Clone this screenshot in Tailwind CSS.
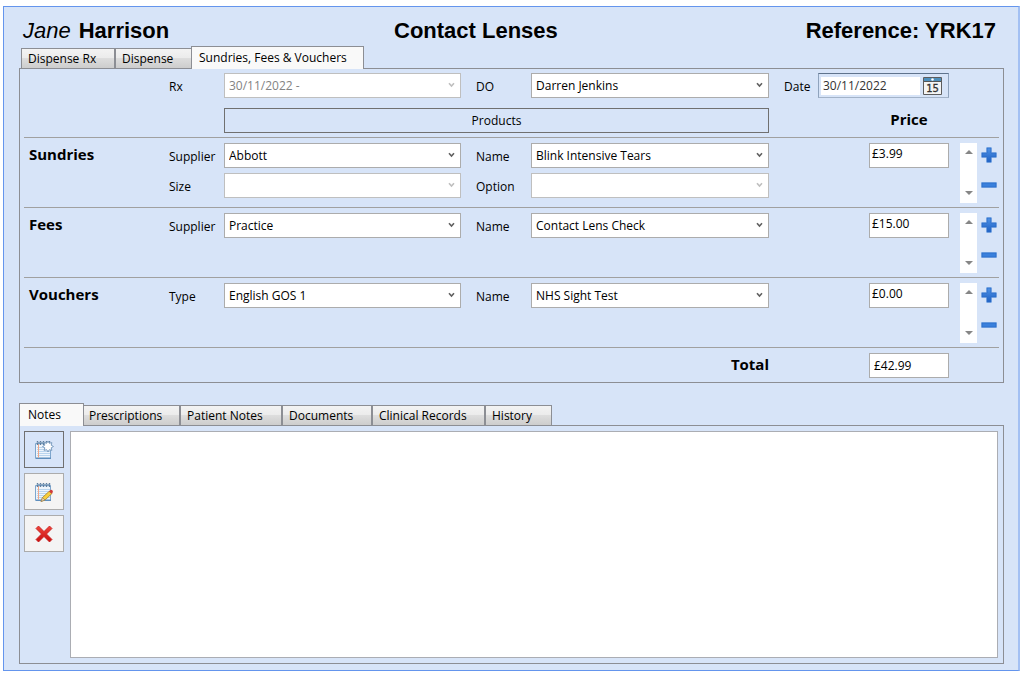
<!DOCTYPE html>
<html lang="en">
<head>
<meta charset="utf-8">
<meta name="viewport" content="width=device-width, initial-scale=1">
<title>Contact Lenses - Sundries, Fees &amp; Vouchers</title>
<script src="https://cdn.jsdelivr.net/npm/@tailwindcss/browser@4"></script>
</head>
<body class="flex min-h-screen flex-col bg-white pt-[6px] pr-[4px] pb-[5px] pl-[3px] font-['Open_Sans','Noto_Sans',sans-serif] text-[12px] leading-4 text-black">

<svg class="absolute h-0 w-0" aria-hidden="true">
  <defs>
    <linearGradient id="blue" x1="0" y1="0" x2="0" y2="1"><stop offset="0" stop-color="#4f92e6"/><stop offset="1" stop-color="#1f62c4"/></linearGradient>
    <linearGradient id="red" x1="0" y1="0" x2="0" y2="1"><stop offset="0" stop-color="#f0463c"/><stop offset="1" stop-color="#c80f0f"/></linearGradient>
    <symbol id="chevron" viewBox="0 0 7 6"><path d="M1 1.2 3.5 4 6 1.2" fill="none" stroke="currentColor" stroke-width="1.6"/></symbol>
    <symbol id="up" viewBox="0 0 8 4"><path d="M0 4 4 0 8 4Z" fill="#868686"/></symbol>
    <symbol id="down" viewBox="0 0 8 4"><path d="M0 0 4 4 8 0Z" fill="#868686"/></symbol>
    <symbol id="plus" viewBox="0 0 16 16"><path d="M5 0h6v5h5v6h-5v5H5v-5H0V5h5Z" fill="#a3c3ee"/><path d="M6 1h4v5h5v4h-5v5H6v-5H1V6h5Z" fill="url(#blue)" stroke="#2c6cc8" stroke-width=".8"/></symbol>
    <symbol id="minus" viewBox="0 0 16 6"><path d="M0 0h16v6H0Z" fill="#8fb6ea"/><path d="M1 1h14v4H1Z" fill="#3a80dc" stroke="#2c6cc8" stroke-width=".8"/></symbol>
    <symbol id="notebook" viewBox="0 0 20 20">
      <path d="M1.500 3.500h15v15h-15Z" fill="#eef5fc" stroke="#7ea6cd"/>
      <path d="M2 17.500h15v1.500H2Z" fill="#5f8fbd"/>
      <path d="M3 7.500h13M3 9.500h13M3 11.500h13M3 13.500h13M3 15.500h13" stroke="#b9d5ee"/>
      <path d="M4.500 4v13.500" stroke="#f2a787"/>
      <path d="M3.500 1v4M6.500 1v4M9.500 1v4M12.500 1v4M15.500 1v4" stroke="#5f7f9f" stroke-width="1.400"/>
      <path d="M3 2.500h12.500" stroke="#8aa6c0"/>
    </symbol>
  </defs>
</svg>

<main class="flex flex-1 flex-col border border-r-2 border-[#6495ed] border-r-[#a3c0f3] bg-[#d7e4f8] pr-[14px] pb-[6px] pl-[15px]">

  <header class="grid h-[39px] grid-cols-[371px_1fr_auto] items-center pt-2 pr-2 pl-1 font-['Liberation_Sans',Arial,sans-serif] text-[22px] leading-7">
    <p class="flex gap-2"><i>Jane</i><b>Harrison</b></p>
    <h1 class="font-bold">Contact Lenses</h1>
    <p class="font-bold">Reference: YRK17</p>
  </header>

  <nav class="flex h-[22px] items-end pl-[2px]" aria-label="Dispensing">
    <button class="h-5 w-[94px] border border-b-0 border-[#8c8e94] bg-[linear-gradient(#f3f3f3,#ebebeb_50%,#dddddd_50%,#cdcdcd)] px-[6px] text-left">Dispense Rx</button>
    <button class="h-5 w-[76px] border border-r-0 border-b-0 border-[#8c8e94] bg-[linear-gradient(#f3f3f3,#ebebeb_50%,#dddddd_50%,#cdcdcd)] px-[6px] text-left">Dispense</button>
    <button class="relative z-10 -mb-px h-[23px] w-[173px] border border-b-0 border-[#8c8e94] bg-[#f9f9f9] px-[7px] text-left whitespace-nowrap" aria-current="page">Sundries, Fees &amp; Vouchers</button>
  </nav>

  <section class="border border-[#8c8e94] px-1 py-1">
    <div class="grid grid-cols-[145px_55px_minmax(0,237fr)_70px_minmax(0,238fr)_100px_80px_50px] gap-y-[10px] pb-1">
      <label for="rx" class="col-start-2 pt-[6px]">Rx</label>
      <div class="relative">
        <select id="rx" disabled class="h-[25px] w-full appearance-none border border-[#bfbfbf] bg-white px-1 text-[#838383] opacity-100"><option>30/11/2022 -</option></select>
        <svg class="pointer-events-none absolute top-[9px] right-[6px] h-[6px] w-[7px] text-[#bfbfbf]"><use href="#chevron"/></svg>
      </div>
      <label for="do" class="pt-[6px] pl-[15px]">DO</label>
      <div class="relative">
        <select id="do" class="h-[25px] w-full appearance-none border border-[#acacac] bg-white px-1"><option>Darren Jenkins</option></select>
        <svg class="pointer-events-none absolute top-[9px] right-[6px] h-[6px] w-[7px] text-[#606060]"><use href="#chevron"/></svg>
      </div>
      <div class="col-span-3 flex pl-[15px]">
        <label for="date" class="w-[34px] pt-[6px]">Date</label>
        <div class="flex h-[25px] w-[131px] items-center border border-t-[#5f738c] border-r-[#8fa3bd] border-b-[#a3b3c8] border-l-[#8fa3bd] p-[2px]">
          <input id="date" value="30/11/2022" class="h-[18px] min-w-0 flex-1 bg-white px-[2px] text-[#333]">
          <button class="mr-[4px] ml-[3px] h-[18px] w-[19px]" aria-label="Choose date">
            <svg viewBox="0 0 19 18" class="h-[18px] w-[19px]">
              <path d="M.5.5h18v17H.5Z" fill="#f4f4f4" stroke="#5d5d5d"/>
              <path d="M1 1h17v3H1Z" fill="#4f8fbb"/><path d="M1 4.500h17" stroke="#555"/><circle cx="9.500" cy="2.500" r="1.300" fill="#fff"/>
              <text x="9.500" y="15" text-anchor="middle" font-family="DejaVu Sans" font-size="10" fill="#333" stroke="#333" stroke-width=".3">15</text>
            </svg>
          </button>
        </div>
      </div>
      <button class="col-span-3 col-start-3 h-[25px] border border-[#707070]">Products</button>
      <h2 class="col-start-7 text-center text-[15px] leading-[22px] font-bold">Price</h2>
    </div>

    <section class="grid grid-cols-[145px_55px_minmax(0,237fr)_70px_minmax(0,238fr)_100px_80px_50px] border-t border-[#a0a0a0] pt-[5px] pb-1">
      <h2 class="pl-[5px] text-[15px] leading-[22px] font-bold">Sundries</h2>
      <div class="col-span-4 grid grid-cols-[55px_minmax(0,237fr)_70px_minmax(0,238fr)] content-start gap-y-[5px]">
        <label for="s-supplier" class="pt-[6px]">Supplier</label>
        <div class="relative">
          <select id="s-supplier" class="h-[25px] w-full appearance-none border border-[#acacac] bg-white px-1"><option>Abbott</option></select>
          <svg class="pointer-events-none absolute top-[9px] right-[6px] h-[6px] w-[7px] text-[#606060]"><use href="#chevron"/></svg>
        </div>
        <label for="s-name" class="pt-[6px] pl-[15px]">Name</label>
        <div class="relative">
          <select id="s-name" class="h-[25px] w-full appearance-none border border-[#acacac] bg-white px-1"><option>Blink Intensive Tears</option></select>
          <svg class="pointer-events-none absolute top-[9px] right-[6px] h-[6px] w-[7px] text-[#606060]"><use href="#chevron"/></svg>
        </div>
        <label for="s-size" class="pt-[6px]">Size</label>
        <div class="relative">
          <select id="s-size" disabled class="h-[25px] w-full appearance-none border border-[#bfbfbf] bg-white px-1 opacity-100"></select>
          <svg class="pointer-events-none absolute top-[9px] right-[6px] h-[6px] w-[7px] text-[#bfbfbf]"><use href="#chevron"/></svg>
        </div>
        <label for="s-option" class="pt-[6px] pl-[15px]">Option</label>
        <div class="relative">
          <select id="s-option" disabled class="h-[25px] w-full appearance-none border border-[#bfbfbf] bg-white px-1 opacity-100"></select>
          <svg class="pointer-events-none absolute top-[9px] right-[6px] h-[6px] w-[7px] text-[#bfbfbf]"><use href="#chevron"/></svg>
        </div>
      </div>
      <input aria-label="Sundries price" value="£3.99" class="col-start-7 h-[25px] w-full border border-[#acacac] bg-white px-[2px] pb-[5px]">
      <div class="flex gap-1 pl-[11px]">
        <div class="flex h-[60px] w-[17px] flex-col items-center justify-between bg-white pt-[7px] pb-2">
          <button aria-label="Scroll up"><svg class="h-1 w-2"><use href="#up"/></svg></button>
          <button aria-label="Scroll down"><svg class="h-1 w-2"><use href="#down"/></svg></button>
        </div>
        <div class="flex flex-col gap-[6px]">
          <button class="h-6" aria-label="Add sundry"><svg class="h-4 w-4"><use href="#plus"/></svg></button>
          <button class="flex h-6 items-center" aria-label="Remove sundry"><svg class="h-[6px] w-4"><use href="#minus"/></svg></button>
        </div>
      </div>
    </section>

    <section class="grid grid-cols-[145px_55px_minmax(0,237fr)_70px_minmax(0,238fr)_100px_80px_50px] border-t border-[#a0a0a0] pt-[5px] pb-1">
      <h2 class="pl-[5px] text-[15px] leading-[22px] font-bold">Fees</h2>
      <label for="f-supplier" class="pt-[6px]">Supplier</label>
      <div class="relative">
        <select id="f-supplier" class="h-[25px] w-full appearance-none border border-[#acacac] bg-white px-1"><option>Practice</option></select>
        <svg class="pointer-events-none absolute top-[9px] right-[6px] h-[6px] w-[7px] text-[#606060]"><use href="#chevron"/></svg>
      </div>
      <label for="f-name" class="pt-[6px] pl-[15px]">Name</label>
      <div class="relative">
        <select id="f-name" class="h-[25px] w-full appearance-none border border-[#acacac] bg-white px-1"><option>Contact Lens Check</option></select>
        <svg class="pointer-events-none absolute top-[9px] right-[6px] h-[6px] w-[7px] text-[#606060]"><use href="#chevron"/></svg>
      </div>
      <input aria-label="Fees price" value="£15.00" class="col-start-7 h-[25px] w-full border border-[#acacac] bg-white px-[2px] pb-[5px]">
      <div class="flex gap-1 pl-[11px]">
        <div class="flex h-[60px] w-[17px] flex-col items-center justify-between bg-white pt-[7px] pb-2">
          <button aria-label="Scroll up"><svg class="h-1 w-2"><use href="#up"/></svg></button>
          <button aria-label="Scroll down"><svg class="h-1 w-2"><use href="#down"/></svg></button>
        </div>
        <div class="flex flex-col gap-[6px]">
          <button class="h-6" aria-label="Add fee"><svg class="h-4 w-4"><use href="#plus"/></svg></button>
          <button class="flex h-6 items-center" aria-label="Remove fee"><svg class="h-[6px] w-4"><use href="#minus"/></svg></button>
        </div>
      </div>
    </section>

    <section class="grid grid-cols-[145px_55px_minmax(0,237fr)_70px_minmax(0,238fr)_100px_80px_50px] border-t border-[#a0a0a0] pt-[5px] pb-1">
      <h2 class="pl-[5px] text-[15px] leading-[22px] font-bold">Vouchers</h2>
      <label for="v-type" class="pt-[6px]">Type</label>
      <div class="relative">
        <select id="v-type" class="h-[25px] w-full appearance-none border border-[#acacac] bg-white px-1"><option>English GOS 1</option></select>
        <svg class="pointer-events-none absolute top-[9px] right-[6px] h-[6px] w-[7px] text-[#606060]"><use href="#chevron"/></svg>
      </div>
      <label for="v-name" class="pt-[6px] pl-[15px]">Name</label>
      <div class="relative">
        <select id="v-name" class="h-[25px] w-full appearance-none border border-[#acacac] bg-white px-1"><option>NHS Sight Test</option></select>
        <svg class="pointer-events-none absolute top-[9px] right-[6px] h-[6px] w-[7px] text-[#606060]"><use href="#chevron"/></svg>
      </div>
      <input aria-label="Vouchers price" value="£0.00" class="col-start-7 h-[25px] w-full border border-[#acacac] bg-white px-[2px] pb-[5px]">
      <div class="flex gap-1 pl-[11px]">
        <div class="flex h-[60px] w-[17px] flex-col items-center justify-between bg-white pt-[7px] pb-2">
          <button aria-label="Scroll up"><svg class="h-1 w-2"><use href="#up"/></svg></button>
          <button aria-label="Scroll down"><svg class="h-1 w-2"><use href="#down"/></svg></button>
        </div>
        <div class="flex flex-col gap-[6px]">
          <button class="h-6" aria-label="Add voucher"><svg class="h-4 w-4"><use href="#plus"/></svg></button>
          <button class="flex h-6 items-center" aria-label="Remove voucher"><svg class="h-[6px] w-4"><use href="#minus"/></svg></button>
        </div>
      </div>
    </section>

    <div class="flex justify-end gap-[100px] border-t border-[#a0a0a0] pt-[5px] pr-[50px]">
      <label for="total" class="text-[15px] leading-[22px] font-bold">Total</label>
      <input id="total" value="£42.99" class="h-[25px] w-20 border border-[#acacac] bg-white px-1">
    </div>
  </section>

  <nav class="mt-5 flex h-[22px] items-end" aria-label="Patient records">
    <button class="relative z-10 -mb-px h-[23px] w-[65px] border border-b-0 border-[#8c8e94] bg-[#f9f9f9] px-2 text-left" aria-current="page">Notes</button>
    <button class="h-5 w-24 border border-b-0 border-l-0 border-[#8c8e94] bg-[linear-gradient(#f3f3f3,#ebebeb_50%,#dddddd_50%,#cdcdcd)] px-[5px] text-left">Prescriptions</button>
    <button class="h-5 w-[102px] border border-b-0 border-[#8c8e94] bg-[linear-gradient(#f3f3f3,#ebebeb_50%,#dddddd_50%,#cdcdcd)] px-[6px] text-left">Patient Notes</button>
    <button class="h-5 w-[90px] border border-b-0 border-[#8c8e94] bg-[linear-gradient(#f3f3f3,#ebebeb_50%,#dddddd_50%,#cdcdcd)] px-[6px] text-left">Documents</button>
    <button class="h-5 w-[113px] border border-b-0 border-[#8c8e94] bg-[linear-gradient(#f3f3f3,#ebebeb_50%,#dddddd_50%,#cdcdcd)] px-[6px] text-left">Clinical Records</button>
    <button class="h-5 w-[67px] border border-b-0 border-[#8c8e94] bg-[linear-gradient(#f3f3f3,#ebebeb_50%,#dddddd_50%,#cdcdcd)] px-[6px] text-left">History</button>
  </nav>

  <section class="flex flex-1 gap-[6px] border border-[#8c8e94] py-[5px] pr-[5px] pl-1">
    <div class="flex flex-col gap-[5px]">
      <button class="grid h-[37px] w-10 place-items-center border border-[#707070]" aria-label="New note">
        <svg viewBox="0 0 20 20" class="h-5 w-5"><use href="#notebook"/><path d="m14 1 1.300 2.300 2.600-.7-.7 2.600L19.500 6.500l-2.300 1.300.7 2.600-2.600-.7L14 12l-1.300-2.300-2.600.7.7-2.600L8.500 6.500l2.300-1.300-.7-2.600 2.600.7Z" fill="#fff" stroke="#7b9dc0"/></svg>
      </button>
      <button class="grid h-[37px] w-10 place-items-center border border-[#acacac] bg-[#f4f4f4]" aria-label="Edit note">
        <svg viewBox="0 0 20 20" class="h-5 w-5"><use href="#notebook"/><path d="m7 19.500 1.500-4 7-6.500 2.500 2.500-7 6.500Z" fill="#f7cf3c" stroke="#a8822a" stroke-width=".8"/><path d="m7 19.500 1.500-4 2.500 2.500Z" fill="#ecd0a4" stroke="#8c7a5c" stroke-width=".6"/><path d="m15 9.500 1.500-1.500q2-.7 2.500 2L17.500 11.800Z" fill="#d03a3a"/></svg>
      </button>
      <button class="grid h-[37px] w-10 place-items-center border border-[#acacac] bg-[#f4f4f4]" aria-label="Delete note">
        <svg viewBox="0 0 18 18" class="h-[18px] w-[18px]"><path d="M3.500 1 9 6.500 14.500 1 17 3.500 11.500 9l5.500 5.500-2.500 2.500L9 11.500 3.500 17 1 14.500 6.500 9 1 3.500Z" fill="url(#red)" stroke="#c41a1a" stroke-width=".8" stroke-linejoin="round"/></svg>
      </button>
    </div>
    <textarea aria-label="Notes" class="flex-1 resize-none border border-[#abadb3] bg-white p-1"></textarea>
  </section>
</main>
</body>
</html>
